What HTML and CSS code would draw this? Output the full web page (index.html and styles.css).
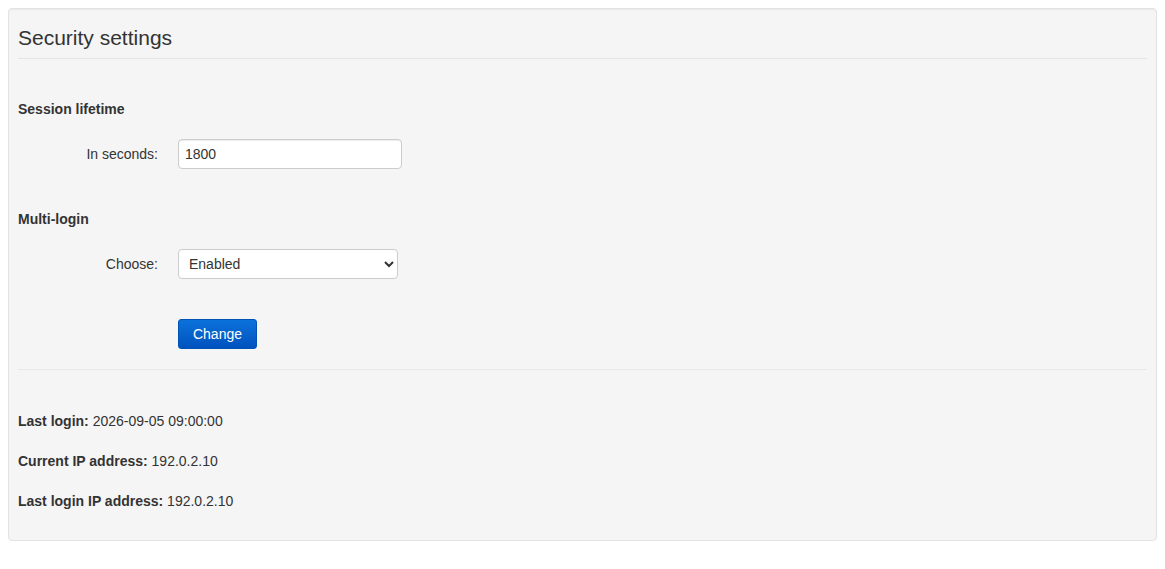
FILE: index.html
```html
<!DOCTYPE html>
<html lang="en">
<head>
<meta charset="utf-8">
<title>Security settings</title>
<link rel="stylesheet" href="styles.css">
</head>
<body>
<div class="well">
  <h3 class="title">Security settings</h3>
  <form class="settings">
    <h4 class="section">Session lifetime</h4>
    <div class="row">
      <label class="label" for="lifetime">In seconds:</label>
      <input class="input" id="lifetime" type="text" value="1800">
    </div>
    <h4 class="section">Multi-login</h4>
    <div class="row">
      <label class="label" for="multi">Choose:</label>
      <select class="select" id="multi">
        <option>Enabled</option>
        <option>Disabled</option>
      </select>
    </div>
    <div class="row actions">
      <span class="label"></span>
      <button class="btn" type="button">Change</button>
    </div>
  </form>
  <hr class="divider">
  <div class="info">
    <p><b>Last login:</b> 2026-09-05 09:00:00</p>
    <p><b>Current IP address:</b> 192.0.2.10</p>
    <p><b>Last login IP address:</b> 192.0.2.10</p>
  </div>
</div>
</body>
</html>
```

FILE: styles.css
```css
html, body {
  margin: 0;
  padding: 0;
  background: #fff;
}
body {
  padding: 8px;
  font-family: "Liberation Sans", Arial, sans-serif;
  font-size: 14px;
  line-height: 20px;
  color: #333;
}
.well {
  background: #f5f5f5;
  border: 1px solid #e3e3e3;
  border-radius: 4px;
  box-shadow: inset 0 1px 1px rgba(0,0,0,.05);
  padding: 9px 9px 29px 9px;
}
.title {
  margin: 0;
  padding: 8px 0 9px 0;
  font-size: 21px;
  line-height: 23px;
  font-weight: normal;
  color: #333;
  border-bottom: 1px solid #e5e5e5;
}
.settings {
  display: flex;
  flex-direction: column;
}
.section {
  margin: 40px 0 0 0;
  font-size: 14px;
  line-height: 20px;
  font-weight: bold;
}
.row {
  display: flex;
  align-items: center;
  gap: 20px;
  margin-top: 20px;
}
.actions {
  margin-top: 40px;
}
.label {
  width: 140px;
  text-align: right;
  flex: none;
}
.input {
  box-sizing: border-box;
  width: 224px;
  height: 30px;
  padding: 0 6px;
  border: 1px solid #ccc;
  border-radius: 4px;
  background: #fff;
  font-family: inherit;
  font-size: 14px;
  color: #333;
  box-shadow: inset 0 1px 1px rgba(0,0,0,.075);
}
.select {
  box-sizing: border-box;
  width: 220px;
  height: 30px;
  padding: 0 6px;
  border: 1px solid #ccc;
  border-radius: 4px;
  background: #fff;
  font-family: inherit;
  font-size: 14px;
  color: #333;
}
.btn {
  box-sizing: border-box;
  width: 79px;
  height: 30px;
  padding: 0;
  border: 1px solid #0052b4;
  border-radius: 3px;
  background: linear-gradient(to bottom, #0b72db 0%, #0052bd 100%);
  color: #fff;
  font-family: inherit;
  font-size: 14px;
  cursor: pointer;
}
.divider {
  margin: 20px 0 0 0;
  border: 0;
  border-top: 1px solid #e8e8e8;
  height: 0;
}
.info {
  display: flex;
  flex-direction: column;
  gap: 20px;
  margin-top: 41px;
}
.info p {
  margin: 0;
}
```
